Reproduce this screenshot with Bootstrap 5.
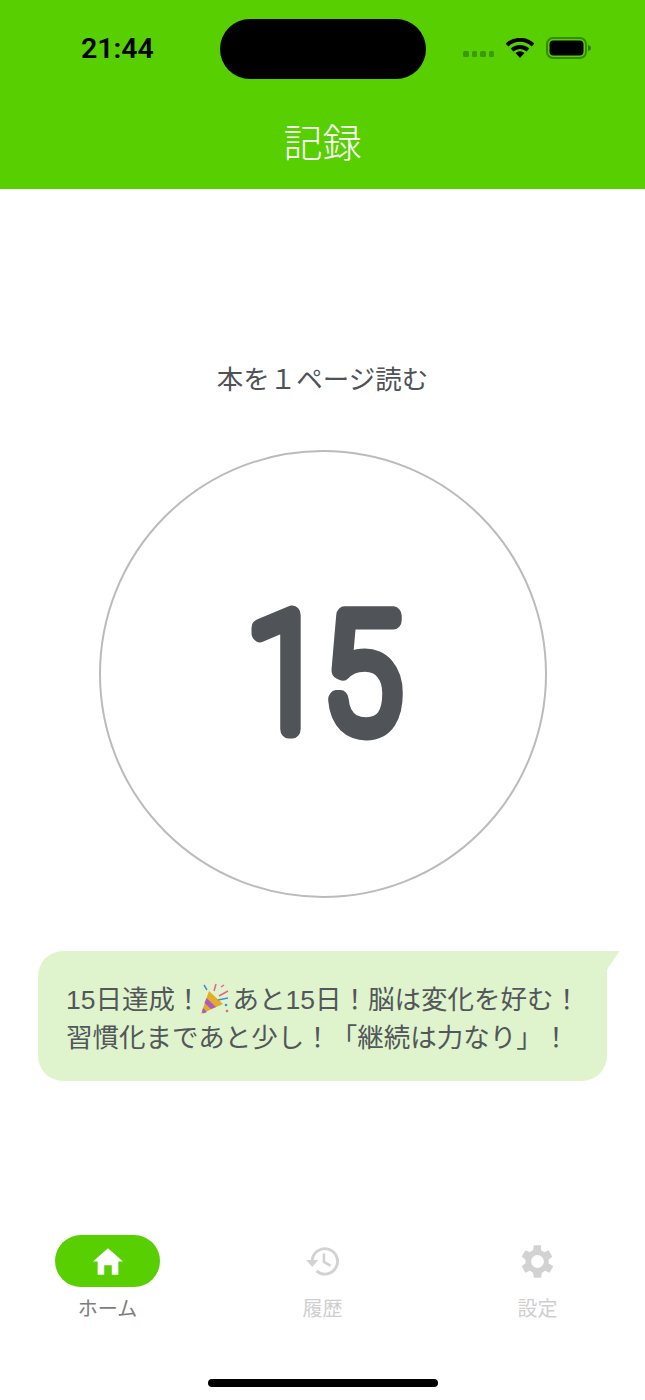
<!DOCTYPE html>
<html lang="ja">
<head>
    <meta charset="UTF-8">
    <meta name="viewport" content="width=device-width, initial-scale=1.0">
    <title>記録</title>
    <link rel="stylesheet" href="https://cdn.jsdelivr.net/npm/bootstrap@5.3.0/dist/css/bootstrap.min.css">
    <style>
        body {
            font-family: "Liberation Sans", "Noto Sans CJK JP", sans-serif;
            color: #53565a;
            background: #fff;
        }
        .app-screen { height: 1400px; width: 645px; overflow: hidden; }
        .app-top { background: #57cf00; height: 189px; }
        .status-row { height: 97px; padding: 19px 52px 0 81px; }
        .clock { font-family: Roboto, "Liberation Sans", sans-serif; font-size: 28.5px; font-weight: 600; color: #000; line-height: 1; margin-top: 16px; width: 139px; }
        .island { width: 206px; height: 60px; border-radius: 30px; background: #000; }
        .status-icons { margin-left: 37px; margin-top: 15px; height: 28px; gap: 12px; }
        .sig-dots { gap: 3px; margin-top: 12px; margin-right: 0; }
        .sig-dots span { width: 5.5px; height: 5.5px; border-radius: 1.5px; background: #3f9900; display: block; }
        .app-title { color: #fff; font-size: 39px; font-weight: 300; line-height: 1; height: 92px; padding-top: 27px; }
        .habit-name { font-size: 26.5px; line-height: 1; margin-top: 178px; color: #4f5256; }
        .count-ring { width: 448px; height: 448px; border-radius: 50%; border: 2px solid #bbb; margin-top: 56px; }
        .count-svg { width: 300px; height: 220px; display: block; }
        .count-num { font-family: Roboto, "Liberation Sans", sans-serif; font-size: 160px; font-weight: 100; fill: #505357; stroke: #505357; stroke-width: 19px; stroke-linejoin: round; stroke-linecap: round; }
        .bubble { background: #dff4cc; width: 569px; height: 130px; margin: 53px 0 0 38px; border-radius: 25px 0 25px 25px; padding: 30px 0 0 28px; font-size: 26.5px; line-height: 38px; color: #53565a; position: relative; white-space: nowrap; }
        .bubble-tail { position: absolute; top: 0; left: 100%; width: 13px; height: 19px; background: #dff4cc; clip-path: polygon(0 0, 100% 0, 0 100%); }
        .popper { width: 30px; height: 32px; vertical-align: -6px; margin: 0 2px 0 -1px; }
        .tab-bar { margin-top: auto; height: 165px; position: relative; }
        .tab-row { padding: 0 55px; }
        .tab-cell { width: 105px; font-size: 20px; line-height: 1; color: #cfcfcf; }
        .tab-cell.is-on { color: #7d7d7d; }
        .tab-pill { width: 105px; height: 52px; border-radius: 26px; margin-bottom: 12px; }
        .is-on .tab-pill { background: #57cf00; }
        .home-bar { position: absolute; left: 208px; bottom: 13px; width: 230px; height: 8px; border-radius: 4px; background: #000; }
    </style>
</head>
<body>
    <div class="app-screen d-flex flex-column">
        <header class="app-top">
            <div class="status-row d-flex align-items-start">
                <div class="clock">21:44</div>
                <div class="island"></div>
                <div class="status-icons d-flex align-items-center">
                    <div class="sig-dots d-flex"><span></span><span></span><span></span><span></span></div>
                    <svg width="28" height="20" viewBox="0 0 28 20">
                        <path d="M1 7 A19 19 0 0 1 27 7" fill="none" stroke="#000" stroke-width="4"/>
                        <path d="M6 12 A12 12 0 0 1 22 12" fill="none" stroke="#000" stroke-width="4"/>
                        <path d="M9.500 15 L14 20 L18.500 15 A7 7 0 0 0 9.500 15Z" fill="#000"/>
                    </svg>
                    <svg width="46" height="22" viewBox="0 0 46 22">
                        <rect x="1" y="1" width="39" height="20" rx="6" fill="none" stroke="#378a00" stroke-width="2"/>
                        <rect x="3.500" y="3.500" width="34" height="15" rx="4" fill="#000"/>
                        <path d="M42 8 C44 8.500 45 9.500 45 11 C45 12.500 44 13.500 42 14Z" fill="#2f7a00"/>
                    </svg>
                </div>
            </div>
            <div class="app-title text-center">記録</div>
        </header>

        <main class="d-flex flex-column">
            <div class="habit-name text-center">本を１ページ読む</div>
            <div class="count-ring d-flex align-items-center justify-content-center mx-auto">
                <svg class="count-svg" viewBox="0 0 300 220">
                    <text class="count-num" transform="translate(151 165) scale(.88 1)" text-anchor="middle">15</text>
                </svg>
            </div>
            <div class="bubble">
                15日達成！<svg class="popper" viewBox="0 0 30 32">
                    <path d="M1 31 L9 8 L23 21Z" fill="#e5ac27"/>
                    <path d="M6.500 15 L16 24 L11 26 L4.500 20Z" fill="#a75cc8"/>
                    <path d="M3 25 L7 29 L3.500 30.500 L2 29Z" fill="#a75cc8"/>
                    <path d="M19 13 L28 8 M14 8 L16 1 M21 4 L24 2" stroke="#e8618c" stroke-width="1.500" fill="none"/>
                    <path d="M4 2 L7 7 M18 17 L28 15" stroke="#3f8fe0" stroke-width="1.500" fill="none"/>
                    <circle cx="26" cy="22" r="1.300" fill="#3f8fe0"/>
                    <circle cx="27" cy="28" r="1.300" fill="#e8618c"/>
                </svg>あと15日！脳は変化を好む！<br>習慣化まであと少し！「継続は力なり」！
                <div class="bubble-tail"></div>
            </div>
        </main>

        <nav class="tab-bar">
            <div class="d-flex justify-content-between tab-row">
                <div class="tab-cell is-on text-center">
                    <div class="tab-pill d-flex align-items-center justify-content-center">
                        <svg width="32" height="29" viewBox="0 0 34 30"><path d="M17 1 L33 15 L28 15 L28 29 L21 29 L21 19 L13 19 L13 29 L6 29 L6 15 L1 15Z" fill="#fff"/></svg>
                    </div>
                    ホーム
                </div>
                <div class="tab-cell text-center">
                    <div class="tab-pill d-flex align-items-center justify-content-center">
                        <svg width="34" height="30" viewBox="1 0 36 32">
                            <path d="M7.500 16 A13.500 13.500 0 1 1 12 26.500" fill="none" stroke="#d2d2d2" stroke-width="3"/>
                            <path d="M1 15 L14 15 L7.500 22.500Z" fill="#d2d2d2"/>
                            <path d="M20 8 L20 17 L27 21" fill="none" stroke="#d2d2d2" stroke-width="2.800"/>
                        </svg>
                    </div>
                    履歴
                </div>
                <div class="tab-cell text-center">
                    <div class="tab-pill d-flex align-items-center justify-content-center">
                        <svg width="33" height="33" viewBox="3 3 18 18"><path fill="#d2d2d2" fill-rule="evenodd" d="M19.400 13a7.500 7.500 0 0 0 0-2l2.100-1.600-2-3.500-2.500 1a7.500 7.500 0 0 0-1.700-1L15.400 3.200h-4l-.4 2.700a7.500 7.500 0 0 0-1.700 1l-2.500-1-2 3.500L6.900 11a7.500 7.500 0 0 0 0 2l-2.100 1.600 2 3.500 2.500-1a7.500 7.500 0 0 0 1.700 1l.4 2.700h4l.4-2.700a7.500 7.500 0 0 0 1.700-1l2.500 1 2-3.500zM13.400 15.500a3.500 3.500 0 1 1 0-7 3.500 3.500 0 0 1 0 7z" transform="translate(-1.400 0)"/></svg>
                    </div>
                    設定
                </div>
            </div>
            <div class="home-bar"></div>
        </nav>
    </div>
    <script src="https://cdn.jsdelivr.net/npm/bootstrap@5.3.0/dist/js/bootstrap.bundle.min.js"></script>
</body>
</html>
